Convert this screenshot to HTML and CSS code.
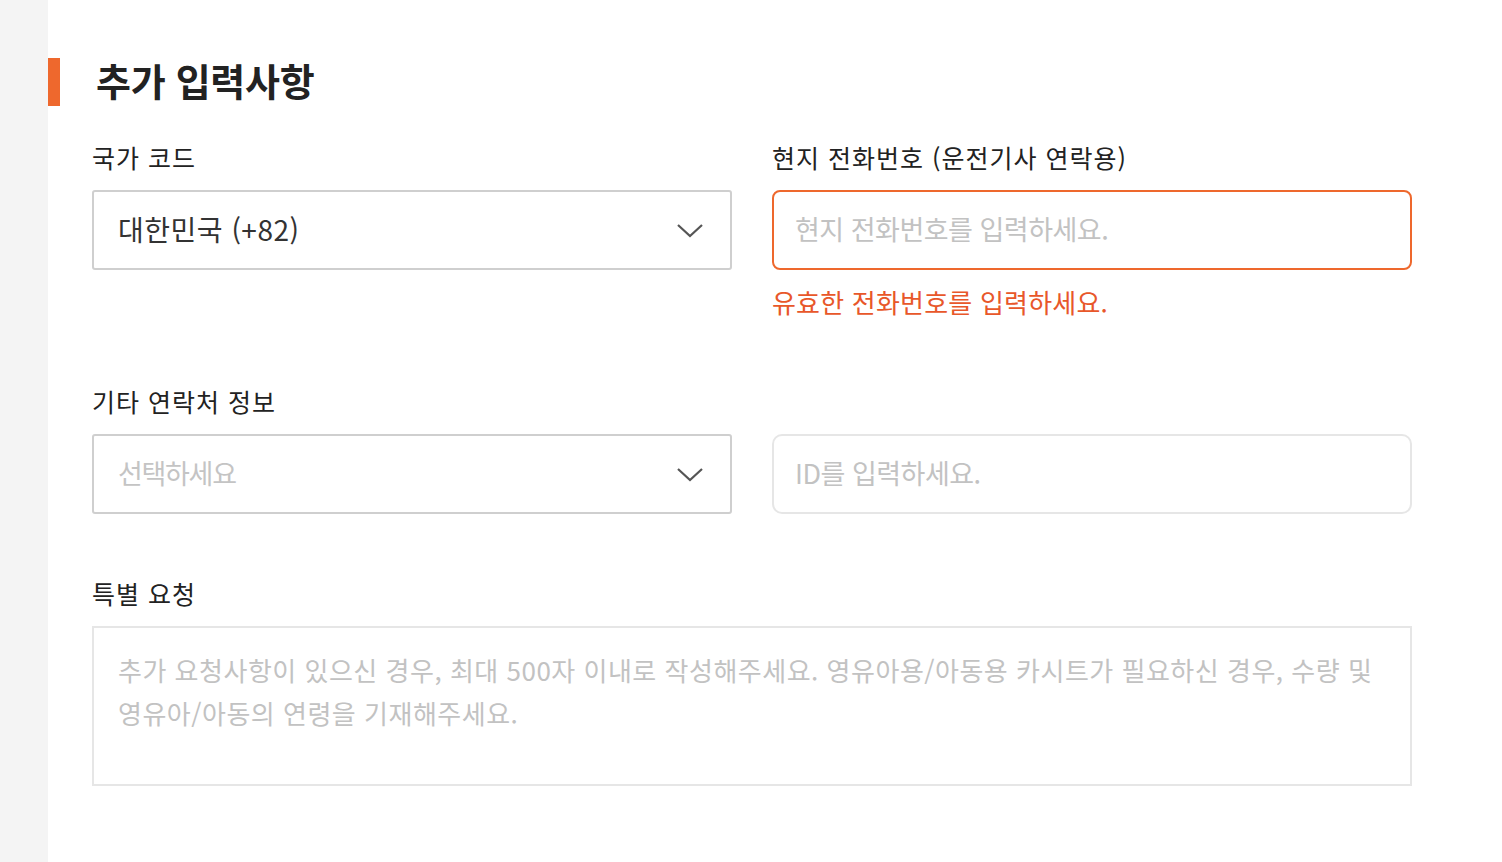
FILE: index.html
```html
<!DOCTYPE html>
<html lang="ko">
<head>
    <meta charset="UTF-8">
    <meta name="viewport" content="width=device-width, initial-scale=1.0">
    <title>추가 입력사항</title>
    <link rel="stylesheet" href="styles.css">
</head>
<body>
    <div class="side"></div>
    <div class="content">
        <h2 class="section-title">추가 입력사항</h2>

        <div class="row">
            <div class="field">
                <label class="label">국가 코드</label>
                <div class="select">
                    <span class="value">대한민국 (+82)</span>
                    <svg class="chevron" width="26" height="14" viewBox="0 0 26 14"><path d="M1 1 L13 12 L25 1" fill="none" stroke="#555" stroke-width="2.2"/></svg>
                </div>
            </div>
            <div class="field">
                <label class="label">현지 전화번호 (운전기사 연락용)</label>
                <input class="input error" type="text" placeholder="현지 전화번호를 입력하세요.">
                <p class="error-text">유효한 전화번호를 입력하세요.</p>
            </div>
        </div>

        <div class="row">
            <div class="field">
                <label class="label">기타 연락처 정보</label>
                <div class="select">
                    <span class="value placeholder">선택하세요</span>
                    <svg class="chevron" width="26" height="14" viewBox="0 0 26 14"><path d="M1 1 L13 12 L25 1" fill="none" stroke="#555" stroke-width="2.2"/></svg>
                </div>
            </div>
            <div class="field">
                <label class="label">&nbsp;</label>
                <input class="input soft" type="text" placeholder="ID를 입력하세요.">
            </div>
        </div>

        <div class="field full">
            <label class="label">특별 요청</label>
            <textarea class="textarea" placeholder="추가 요청사항이 있으신 경우, 최대 500자 이내로 작성해주세요. 영유아용/아동용 카시트가 필요하신 경우, 수량 및&#10;영유아/아동의 연령을 기재해주세요."></textarea>
        </div>
    </div>
</body>
</html>
```

FILE: styles.css
```css
body {
    margin: 0;
    padding: 0;
    display: flex;
    min-height: 100vh;
    font-family: 'Noto Sans CJK KR', 'Noto Sans', sans-serif;
    color: #222;
    background-color: #fff;
}
.side {
    width: 48px;
    flex-shrink: 0;
    background-color: #f4f4f4;
}
.content {
    width: 1320px;
    padding: 58px 0 0 44px;
}
.section-title {
    margin: 0 0 34px -44px;
    height: 48px;
    padding-left: 36px;
    line-height: 44px;
    font-size: 38px;
    font-weight: 700;
    letter-spacing: -0.3px;
    border-left: 12px solid #ee682d;
    box-sizing: border-box;
}
.row {
    display: grid;
    grid-template-columns: 640px 640px;
    column-gap: 40px;
    margin-bottom: 14px;
}
.field {
    display: flex;
    flex-direction: column;
}
.label {
    display: block;
    height: 34px;
    margin-bottom: 16px;
    font-size: 25px;
    line-height: 34px;
    letter-spacing: 1px;
    color: #222;
}
.select {
    display: flex;
    align-items: center;
    justify-content: space-between;
    height: 80px;
    padding: 0 27px 3px 24px;
    border: 2px solid #cfcfcf;
    border-radius: 3px;
    box-sizing: border-box;
}
.value {
    font-size: 28px;
    letter-spacing: 0.5px;
    color: #333;
}
.value.placeholder {
    font-size: 27px;
    letter-spacing: -1.3px;
    color: #c4c4c4;
}
.chevron {
    margin-top: 5px;
}
.input {
    height: 80px;
    padding: 0 21px 3px;
    font-family: inherit;
    font-size: 27px;
    letter-spacing: -0.5px;
    border: 2px solid #e6e6e6;
    border-radius: 10px;
    box-sizing: border-box;
    outline: none;
}
.input::placeholder, .textarea::placeholder {
    color: #c2c2c2;
}
.input.error {
    border-color: #ee682d;
    border-radius: 8px;
}
.error-text {
    margin: 14px 0 50px;
    font-size: 26px;
    line-height: 36px;
    letter-spacing: 0.2px;
    color: #e8572a;
}
.full {
    margin-top: 62px;
}
.textarea {
    height: 160px;
    padding: 20px 24px 22px;
    font-family: inherit;
    font-size: 26px;
    line-height: 43px;
    letter-spacing: 0.5px;
    border: 2px solid #e6e6e6;
    border-radius: 0;
    box-sizing: border-box;
    resize: none;
    outline: none;
}
```
